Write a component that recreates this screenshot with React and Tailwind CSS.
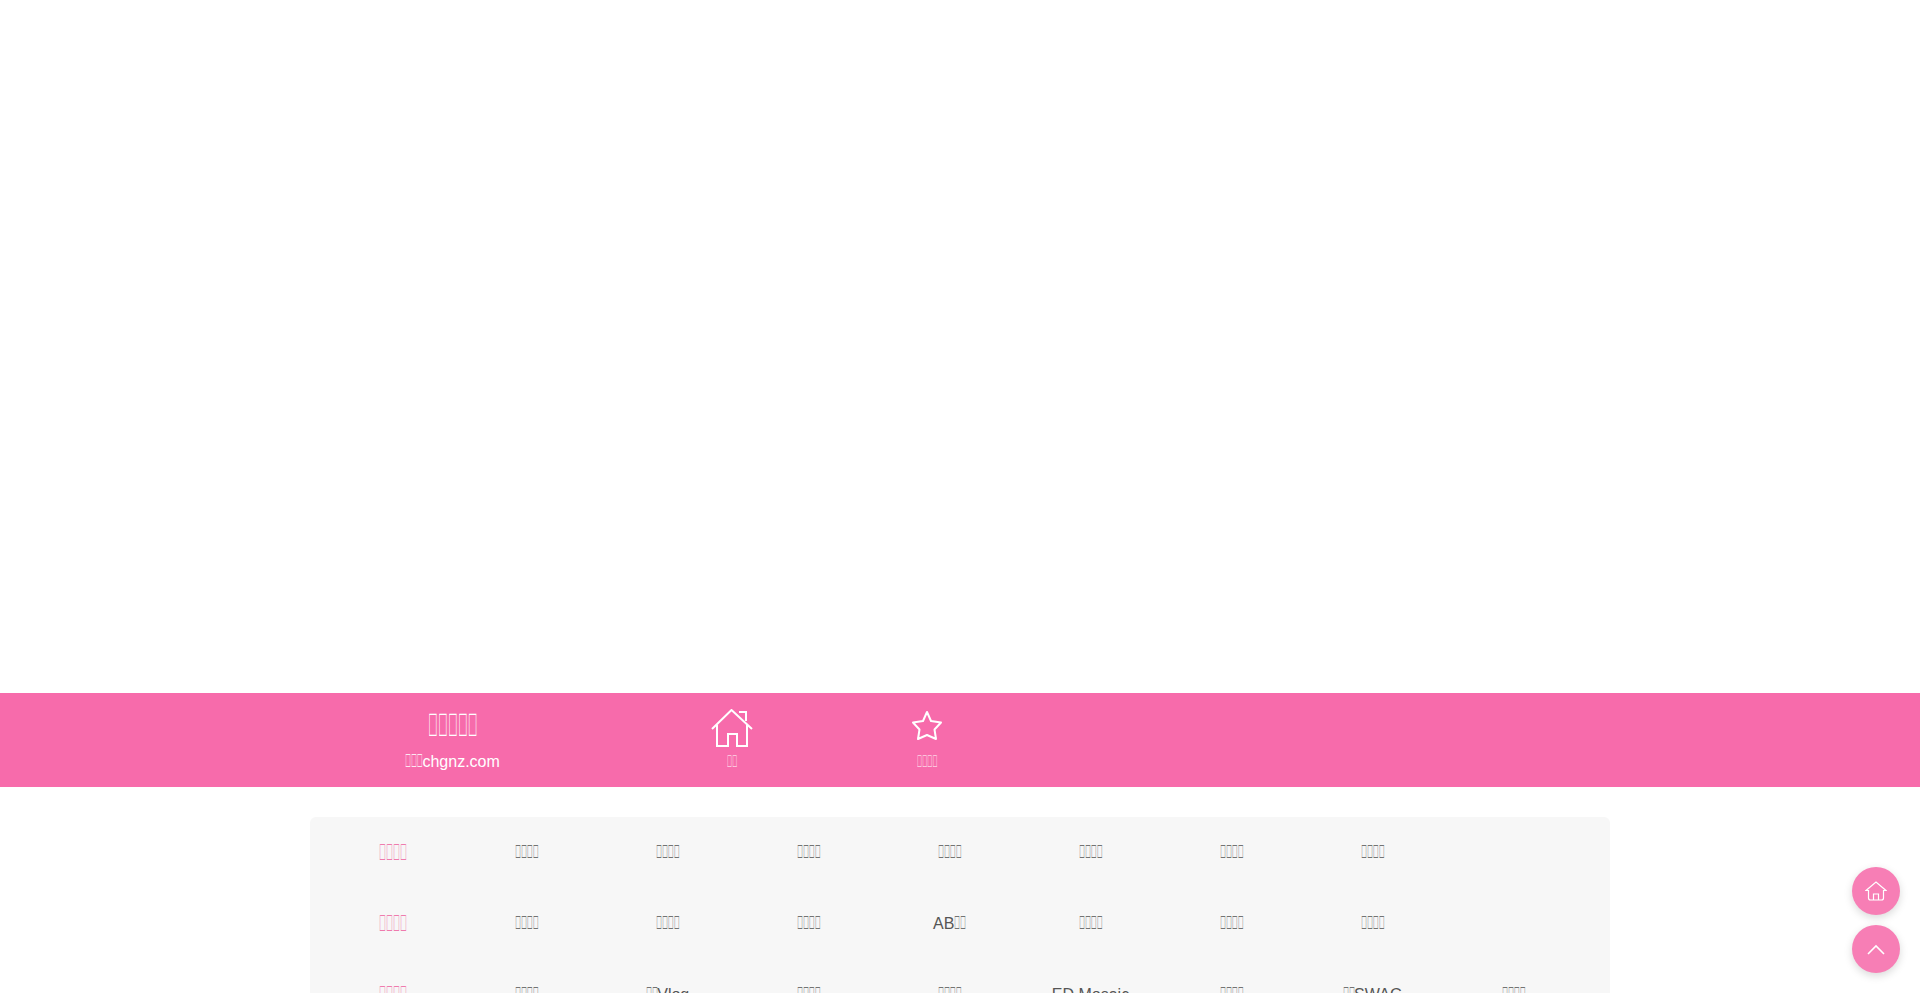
const glyphs = (n) => "\uE000".repeat(n);

function T({ n }) {
  const widths = { 2: "w-[0.6em]", 3: "w-[0.9em]", 4: "w-[1.2em]", 5: "w-[1.5em]" };
  return (
    <span className={`inline-block origin-left scale-x-[0.41] whitespace-nowrap text-[1.2em] leading-none ${widths[n]}`}>
      {glyphs(n)}
    </span>
  );
}

const rows = [
  [[4], [4], [4], [4], [4], [4], [4]],
  [[4], [4], [4], [2, "AB", true], [4], [4], [4]],
  [[4], [2, "Vlog"], [4], [4], [0, "ED Mosaic"], [4], [2, "SWAG"], [4]],
];

function Item({ n, text, after }) {
  return (
    <div className="w-[141px] text-center">
      {!after && n > 0 && <T n={n} />}
      {text}
      {after && <T n={n} />}
    </div>
  );
}

function HomeBig() {
  return (
    <svg width="42" height="38" viewBox="0 0 42 38" fill="none" stroke="#fff" strokeWidth="2">
      <path d="M1 20 L20.500 1 L41 20" />
      <path d="M28 3 H35 V12" />
      <path d="M6 16 V37 H17 V25 H26 V37 H36 V16" />
    </svg>
  );
}

function Star() {
  return (
    <svg width="32" height="32" viewBox="0 0 32 32" fill="none" stroke="#fff" strokeWidth="2" strokeLinejoin="round">
      <path d="M16 2 L20 11 L30 12.500 L23.500 19.500 L25 29 L16 25 L7 29 L8.500 19.500 L2 12.500 L12 11 Z" />
    </svg>
  );
}

function HomeSmall() {
  return (
    <svg width="22" height="20" viewBox="0 0 22 20" fill="none" stroke="#fff" strokeWidth="1.200">
      <path d="M1 9.500 L11 1 L21 9.500 L18.500 9.500 V17 Q18.500 19 16.500 19 H5.500 Q3.500 19 3.500 17 V9.500 Z" />
      <path d="M8.500 19 V13 H13.500 V19" />
    </svg>
  );
}

function Chevron() {
  return (
    <svg width="18" height="11" viewBox="0 0 18 11" fill="none" stroke="#fff" strokeWidth="1.600">
      <path d="M1 10 L9 2 L17 10" />
    </svg>
  );
}

export default function App() {
  return (
    <div className="min-h-[1200px] bg-white text-[16px] text-[#555] [font-family:'Liberation_Sans',sans-serif]">
      <div className="h-[693px]" />
      <div className="h-[94px] bg-[#f76bab] text-white">
        <div className="mx-auto flex h-full w-[1300px]">
          <div className="flex w-[285px] flex-col items-center">
            <div className="mt-[16px] text-[27px] leading-[32px]"><T n={5} /></div>
            <div className="mt-[7px] text-[16px] leading-[24px]"><T n={3} />chgnz.com</div>
          </div>
          <div className="ml-[39px] flex w-[195px] flex-col items-center">
            <div className="mt-[16px] h-[38px]"><HomeBig /></div>
            <div className="mt-[5px] pl-[2px] text-[14px] leading-[20px]"><T n={2} /></div>
          </div>
          <div className="flex w-[195px] flex-col items-center">
            <div className="mt-[17px] h-[39px]"><Star /></div>
            <div className="mt-[3px] pl-[2px] text-[14px] leading-[20px]"><T n={4} /></div>
          </div>
        </div>
      </div>
      <div className="mx-auto mt-[30px] w-[1300px] rounded-[6px] bg-[#f7f7f7] pb-4 pl-[19px]">
        {rows.map((items, i) => (
          <div key={i} className="flex h-[71px] items-center">
            <div className="w-[127px] pt-[4px] text-center text-[19px] text-[#ee5fa0]"><T n={4} /></div>
            {items.map(([n, text, after], j) => (
              <Item key={j} n={n} text={text} after={after} />
            ))}
          </div>
        ))}
      </div>
      <div className="fixed right-[20px] top-[867px] flex h-[48px] w-[48px] items-center justify-center rounded-full bg-[#f77eb5] shadow-[0_3px_8px_rgba(0,0,0,0.15)]">
        <HomeSmall />
      </div>
      <div className="fixed right-[20px] top-[925px] flex h-[48px] w-[48px] items-center justify-center rounded-full bg-[#f77eb5] shadow-[0_3px_8px_rgba(0,0,0,0.15)]">
        <Chevron />
      </div>
    </div>
  );
}
